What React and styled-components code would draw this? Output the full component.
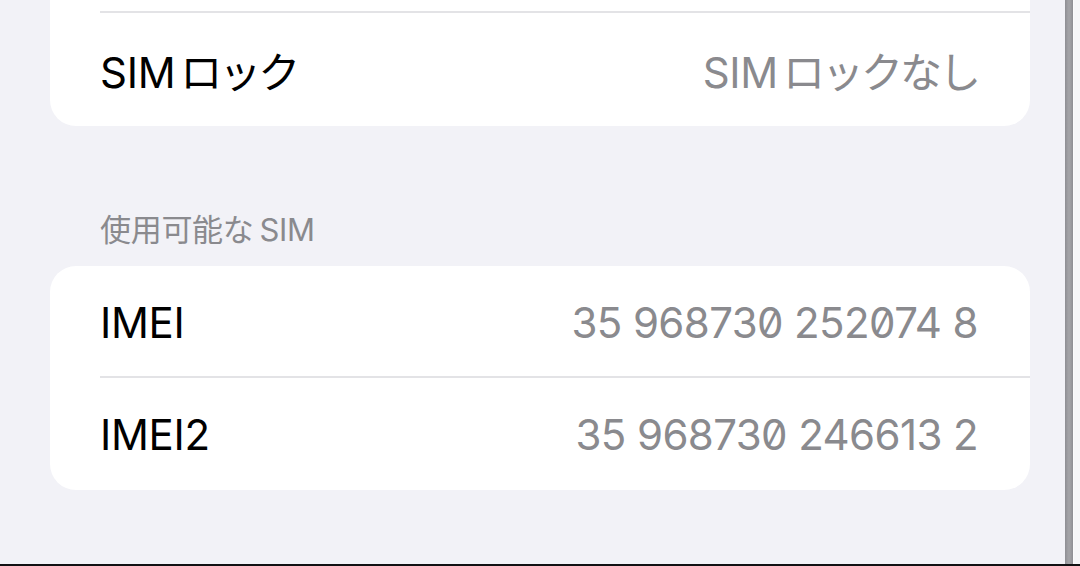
import React from 'react';
import styled, { createGlobalStyle } from 'styled-components';

const GlobalStyle = createGlobalStyle`
  html, body {
    margin: 0;
    padding: 0;
    background: #f2f2f7;
    overflow: hidden;
  }
  body {
    font-family: 'Inter', 'Noto Sans CJK JP', sans-serif;
    -webkit-font-smoothing: antialiased;
  }
`;

const Screen = styled.div`
  width: 1080px;
  height: 566px;
  display: flex;
  flex-direction: column;
  background: #f2f2f7;
`;

const Upper = styled.div`
  flex: 1;
  display: flex;
  min-height: 0;
`;

const Content = styled.div`
  flex: 1;
  padding: 0 35px 0 50px;
  overflow: hidden;
`;

const Divider = styled.div`
  width: 8px;
  background: linear-gradient(90deg, #8e8e93 0, #a2a2a6 40%, #a2a2a6 60%, #8e8e93 100%);
`;

const Edge = styled.div`
  width: 7px;
  background: #f6f6f8;
  border-left: 1px solid #fbfbfc;
  box-sizing: border-box;
`;

const BottomBar = styled.div`
  height: 2px;
  background: #111113;
`;

const Card = styled.div`
  background: #ffffff;
  border-radius: 26px;
  overflow: hidden;
  margin-top: ${(props) => props.offset || 0}px;
`;

const Row = styled.div`
  height: ${(props) => props.h || 112}px;
  display: flex;
  align-items: center;
  justify-content: space-between;
  padding: 0 52px 0 50px;
  position: relative;

  &:not(:last-child)::after {
    content: '';
    position: absolute;
    left: 50px;
    right: 0;
    bottom: 0;
    height: 2px;
    background: #e3e3e6;
  }
`;

const Label = styled.span`
  font-size: 42px;
  color: #000000;
  letter-spacing: -0.3px;
`;

const Value = styled.span`
  font-size: 42px;
  color: #8a8a8e;
  letter-spacing: ${(props) => (props.numeric ? '-0.6px' : '-0.3px')};
  font-feature-settings: 'zero' 1;
`;

/* Latin run mixed with kana gets a little breathing room */
const Latin = styled.span`
  margin-left: ${(props) => props.before || 0}px;
  margin-right: ${(props) => props.after || 0}px;
`;

const Kana = styled.span`
  letter-spacing: -3px;
`;

const SectionHeader = styled.div`
  margin: 84px 0 16px;
  padding-left: 50px;
  font-size: 31px;
  line-height: 40px;
  color: #8a8a8e;
  letter-spacing: -0.3px;
`;

const simRows = [
  { label: 'IMEI', value: '35 968730 252074 8' },
  { label: 'IMEI2', value: '35 968730 246613 2' },
];

export default function App() {
  return (
    <>
      <GlobalStyle />
      <Screen>
        <Upper>
          <Content>
            <Card offset={-100}>
              <Row h={113} />
              <Row h={113}>
                <Label>
                  <Latin after={5}>SIM</Latin>
                  <Kana>ロック</Kana>
                </Label>
                <Value>
                  <Latin after={5}>SIM</Latin>
                  <Kana>ロックなし</Kana>
                </Value>
              </Row>
            </Card>

            <SectionHeader>
              使用可能な<Latin before={6}>SIM</Latin>
            </SectionHeader>

            <Card>
              {simRows.map((r) => (
                <Row key={r.label}>
                  <Label>{r.label}</Label>
                  <Value numeric>{r.value}</Value>
                </Row>
              ))}
            </Card>
          </Content>
          <Divider />
          <Edge />
        </Upper>
        <BottomBar />
      </Screen>
    </>
  );
}
